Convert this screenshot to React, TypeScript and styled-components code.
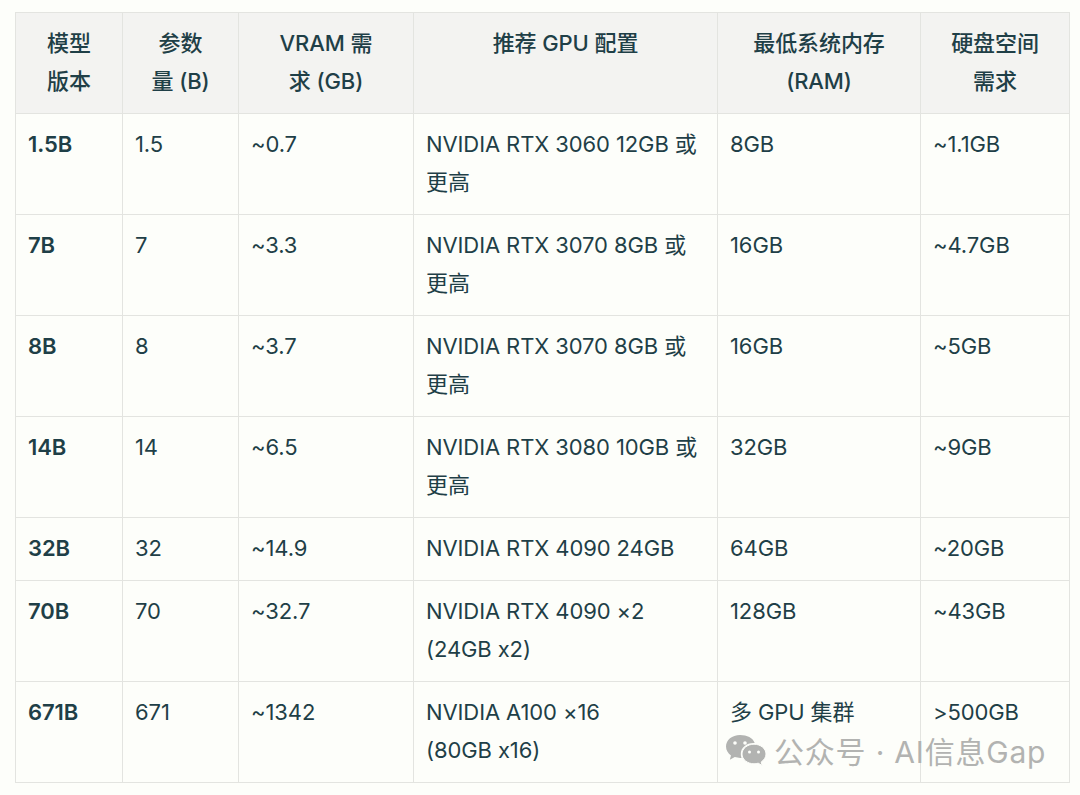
import React from 'react'
import styled, { createGlobalStyle } from 'styled-components'

const GlobalStyle = createGlobalStyle`
  html, body {
    margin: 0;
    background: #fdfefa;
  }
`

const Page = styled.div`
  position: relative;
  width: 1080px;
  height: 795px;
  box-sizing: border-box;
  padding: 12px 0 0 15px;
  overflow: hidden;
  font-family: Inter, "Noto Sans CJK SC", sans-serif;
  color: #1f3f47;
`

const Table = styled.table`
  width: 1055px;
  table-layout: fixed;
  border-collapse: collapse;
  font-size: 22px;
  line-height: 38px;
  letter-spacing: -0.1px;
`

const HeadCell = styled.th`
  height: 100px;
  box-sizing: border-box;
  padding: 11px 12px 13px;
  border: 1px solid #e3e4e0;
  background: #f3f3f1;
  font-weight: 500;
  text-align: center;
  vertical-align: top;
  white-space: pre-line;
`

const Cell = styled.td<{ $strong?: boolean }>`
  box-sizing: border-box;
  padding: 11px 12px 13px;
  border: 1px solid #e3e4e0;
  font-weight: ${({ $strong }) => ($strong ? 600 : 400)};
  vertical-align: top;
  white-space: pre-line;
`

const Watermark = styled.div`
  position: absolute;
  left: 725px;
  top: 732px;
  display: flex;
  align-items: center;
  gap: 7px;
  color: #b2b3b1;
  font-size: 30px;
  line-height: 40px;
  letter-spacing: 0.8px;
  white-space: nowrap;
`

const columns = [107, 116, 175, 304, 203, 149]
const headers = ['模型\n版本', '参数\n量 (B)', 'VRAM 需\n求 (GB)', '推荐 GPU 配置', '最低系统内存\n(RAM)', '硬盘空间\n需求']
const rows = [
  ['1.5B', '1.5', '~0.7', 'NVIDIA RTX 3060 12GB 或\n更高', '8GB', '~1.1GB'],
  ['7B', '7', '~3.3', 'NVIDIA RTX 3070 8GB 或\n更高', '16GB', '~4.7GB'],
  ['8B', '8', '~3.7', 'NVIDIA RTX 3070 8GB 或\n更高', '16GB', '~5GB'],
  ['14B', '14', '~6.5', 'NVIDIA RTX 3080 10GB 或\n更高', '32GB', '~9GB'],
  ['32B', '32', '~14.9', 'NVIDIA RTX 4090 24GB', '64GB', '~20GB'],
  ['70B', '70', '~32.7', 'NVIDIA RTX 4090 ×2\n(24GB x2)', '128GB', '~43GB'],
  ['671B', '671', '~1342', 'NVIDIA A100 ×16\n(80GB x16)', '多 GPU 集群', '>500GB'],
]

function WechatIcon() {
  return (
    <svg width="42" height="36" viewBox="0 0 42 36" fill="#b2b3b1">
      <path d="M15 1C7 1 1 6 1 12.500c0 3.800 2 6.800 5 9l-1.200 4.300 5-2.700c1.800.5 3.500.8 5.500.8h1.200c-.5-1.300-.7-2.500-.7-3.900 0-6.300 5.700-11 12.700-11h1.200C28 3.800 22 1 15 1z" />
      <path d="M41 20c0-5.500-5.500-9.800-12-9.800S17 14.500 17 20s5.500 9.800 12 9.800c1.500 0 2.800-.2 4.200-.6l4 2.300-1-3.500c2.900-2 4.800-4.800 4.800-8z" stroke="#fdfefa" strokeWidth="1" />
      <circle cx="10" cy="9" r="1.800" fill="#fdfefa" />
      <circle cx="20" cy="9" r="1.800" fill="#fdfefa" />
      <circle cx="24.500" cy="18" r="1.500" fill="#fdfefa" />
      <circle cx="33.500" cy="18" r="1.500" fill="#fdfefa" />
    </svg>
  )
}

export default function App() {
  return (
    <Page>
      <GlobalStyle />
      <Table>
        <colgroup>
          {columns.map((width, i) => <col key={i} style={{ width }} />)}
        </colgroup>
        <thead>
          <tr>
            {headers.map(h => <HeadCell key={h}>{h}</HeadCell>)}
          </tr>
        </thead>
        <tbody>
          {rows.map(row => (
            <tr key={row[0]}>
              {row.map((value, i) => <Cell key={i} $strong={i === 0}>{value}</Cell>)}
            </tr>
          ))}
        </tbody>
      </Table>
      <Watermark>
        <WechatIcon />
        <span>公众号 · AI信息Gap</span>
      </Watermark>
    </Page>
  )
}
